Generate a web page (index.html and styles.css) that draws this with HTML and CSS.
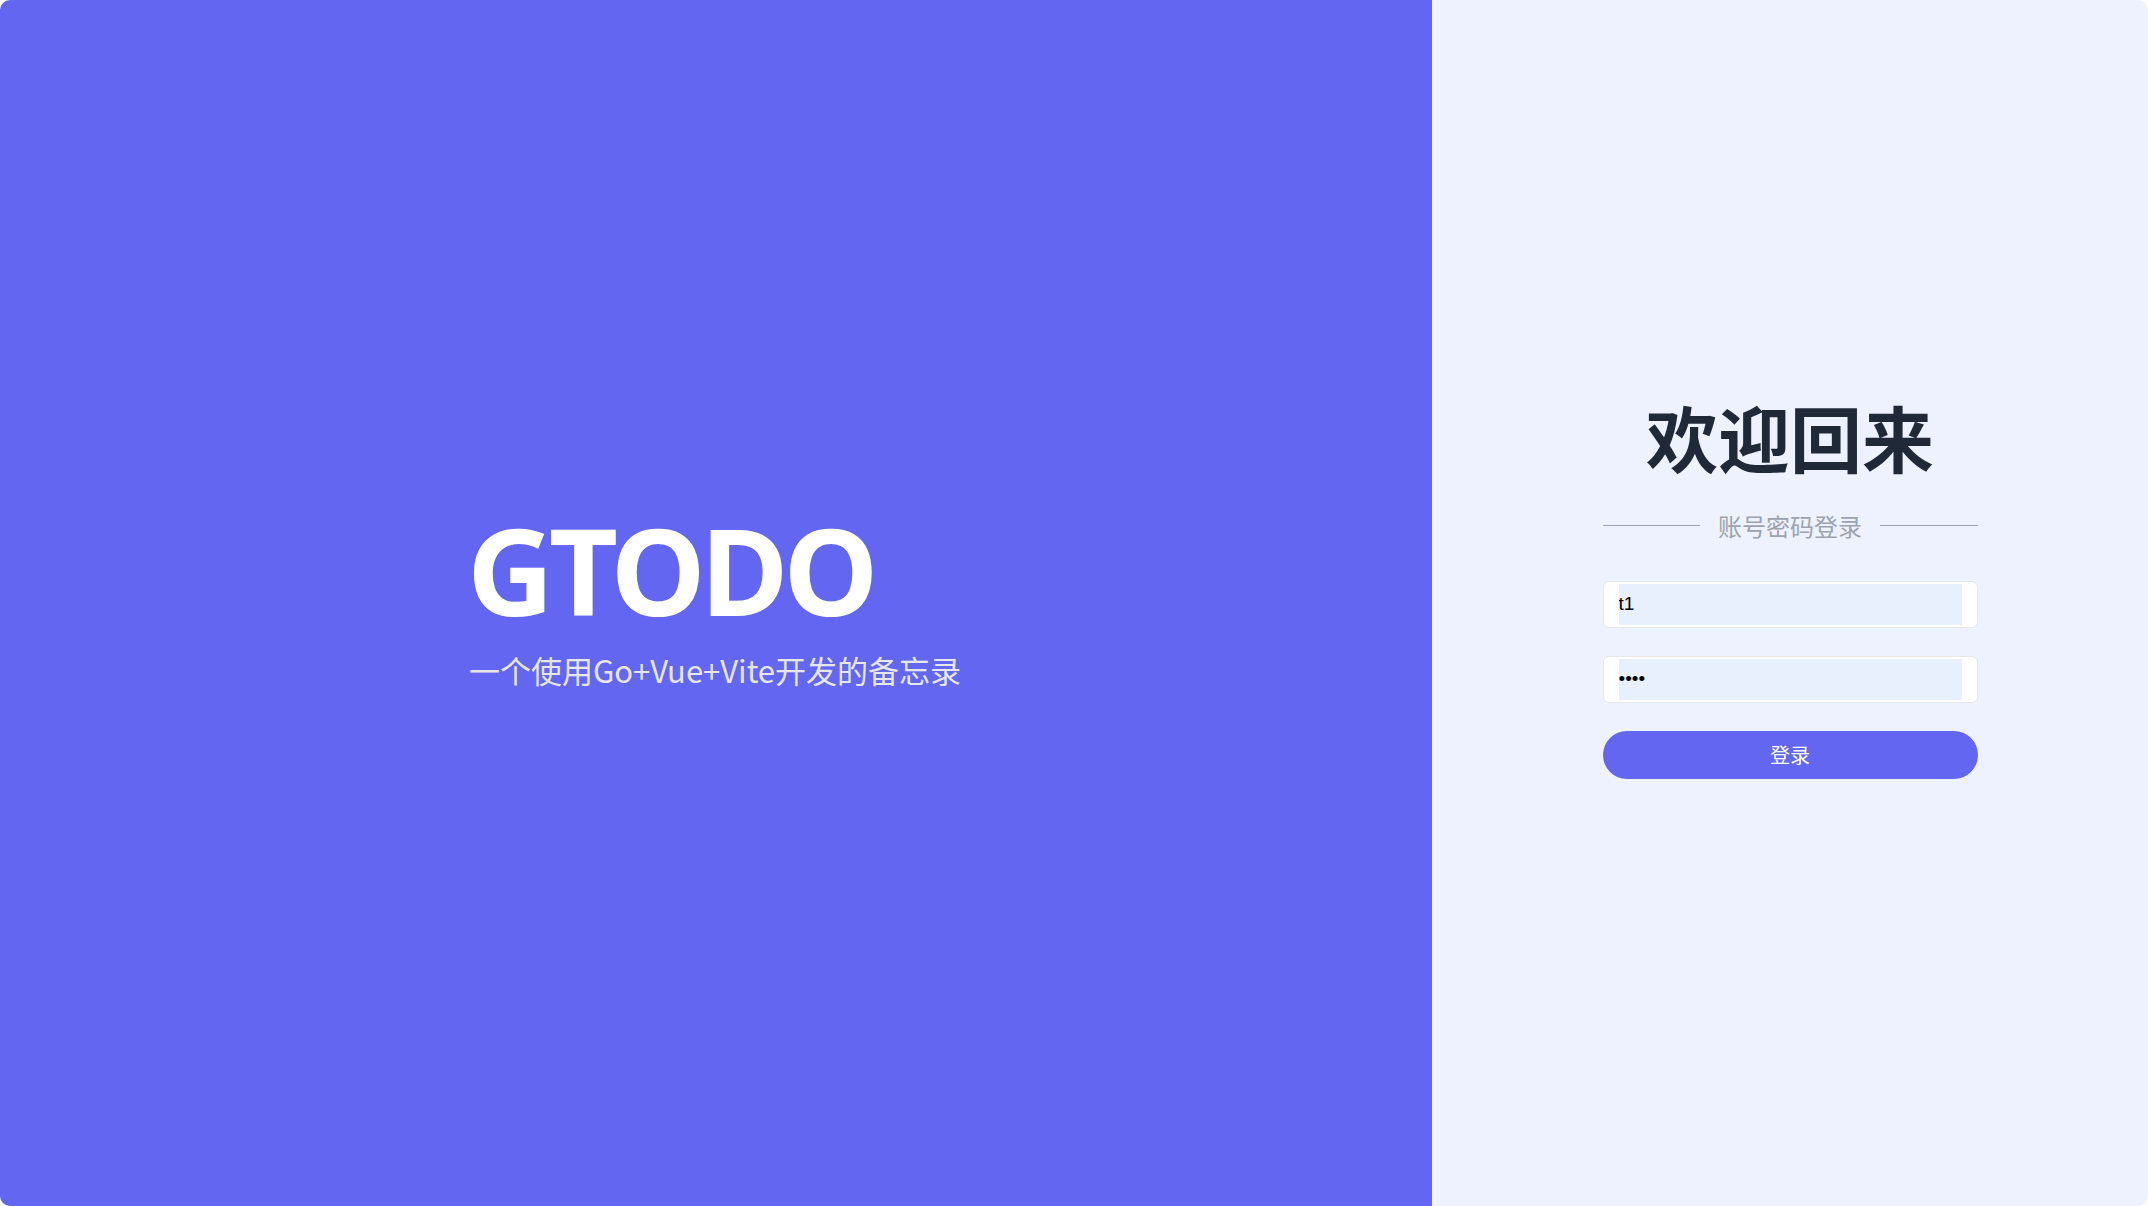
FILE: index.html
```html
<!DOCTYPE html>
<html lang="zh-CN">
<head>
<meta charset="utf-8">
<title>GTODO</title>
<link rel="stylesheet" href="styles.css">
</head>
<body>
<div class="app">
  <section class="hero">
    <div class="hero-inner">
      <h1 class="brand">GTODO</h1>
      <p class="tagline">一个使用Go+Vue+Vite开发的备忘录</p>
    </div>
  </section>
  <section class="side">
    <form class="login" onsubmit="return false">
      <h2 class="welcome">欢迎回来</h2>
      <div class="divider">
        <span class="divider-line"></span>
        <span class="divider-text">账号密码登录</span>
        <span class="divider-line"></span>
      </div>
      <div class="field"><input class="field-input" type="text" value="t1"></div>
      <div class="field"><input class="field-input" type="password" value="1234"></div>
      <button class="submit" type="submit">登录</button>
    </form>
  </section>
</div>
</body>
</html>
```
FILE: styles.css
```css
* { box-sizing: border-box; }
html, body { margin: 0; padding: 0; background: #ffffff; }
body { width: 2148px; height: 1206px; overflow: hidden; }

.app {
  display: flex;
  width: 2148px;
  height: 1206px;
  border-radius: 10px;
  overflow: hidden;
}

.hero {
  width: 1432px;
  background: #6366f1;
  display: flex;
  align-items: center;
  justify-content: center;
}
.hero-inner { display: flex; flex-direction: column; padding-bottom: 6px; }
.brand {
  margin: 0 0 0 -4px;
  color: #ffffff;
  font-family: "Noto Sans", "Open Sans", sans-serif;
  font-weight: 700;
  font-size: 120px;
  line-height: 1;
  letter-spacing: -5px;
}
.tagline {
  margin: 20px 0 0 -2px;
  color: #e5e7eb;
  font-family: "Noto Sans CJK SC", "Noto Sans", sans-serif;
  font-size: 31px;
  line-height: 40px;
  white-space: nowrap;
}

.side {
  flex: 1;
  background: #eef2ff;
  display: flex;
  align-items: center;
  justify-content: center;
}
.login {
  width: 375px;
  display: flex;
  flex-direction: column;
  align-items: stretch;
  margin-bottom: 32px;
}
.welcome {
  margin: 0;
  text-align: center;
  color: #1f2937;
  font-family: "Noto Sans CJK SC", sans-serif;
  font-weight: 700;
  font-size: 72px;
  line-height: 80px;
}
.divider {
  display: flex;
  align-items: center;
  gap: 18px;
  margin-top: 34px;
}
.divider-line { flex: 1; height: 1px; background: #9ca3af; }
.divider-text {
  color: #9ca3af;
  font-family: "Noto Sans CJK SC", sans-serif;
  font-size: 24px;
  line-height: 32px;
}
.field {
  height: 47px;
  margin-top: 39px;
  background: #ffffff;
  border: 1px solid #e5e7eb;
  border-radius: 6px;
  padding: 2px 15px;
  display: flex;
}
.field + .field { margin-top: 28px; }
.field-input {
  flex: 1;
  width: 100%;
  border: 0;
  outline: none;
  margin: 0;
  padding: 0;
  background: #e8f0fe;
  color: #000000;
  font-family: "Liberation Sans", Arial, sans-serif;
  font-size: 19px;
}
.submit {
  margin-top: 28px;
  height: 48px;
  border: 0;
  border-radius: 24px;
  background: #6366f1;
  color: #ffffff;
  font-family: "Noto Sans CJK SC", sans-serif;
  font-size: 20px;
  cursor: pointer;
}
```
